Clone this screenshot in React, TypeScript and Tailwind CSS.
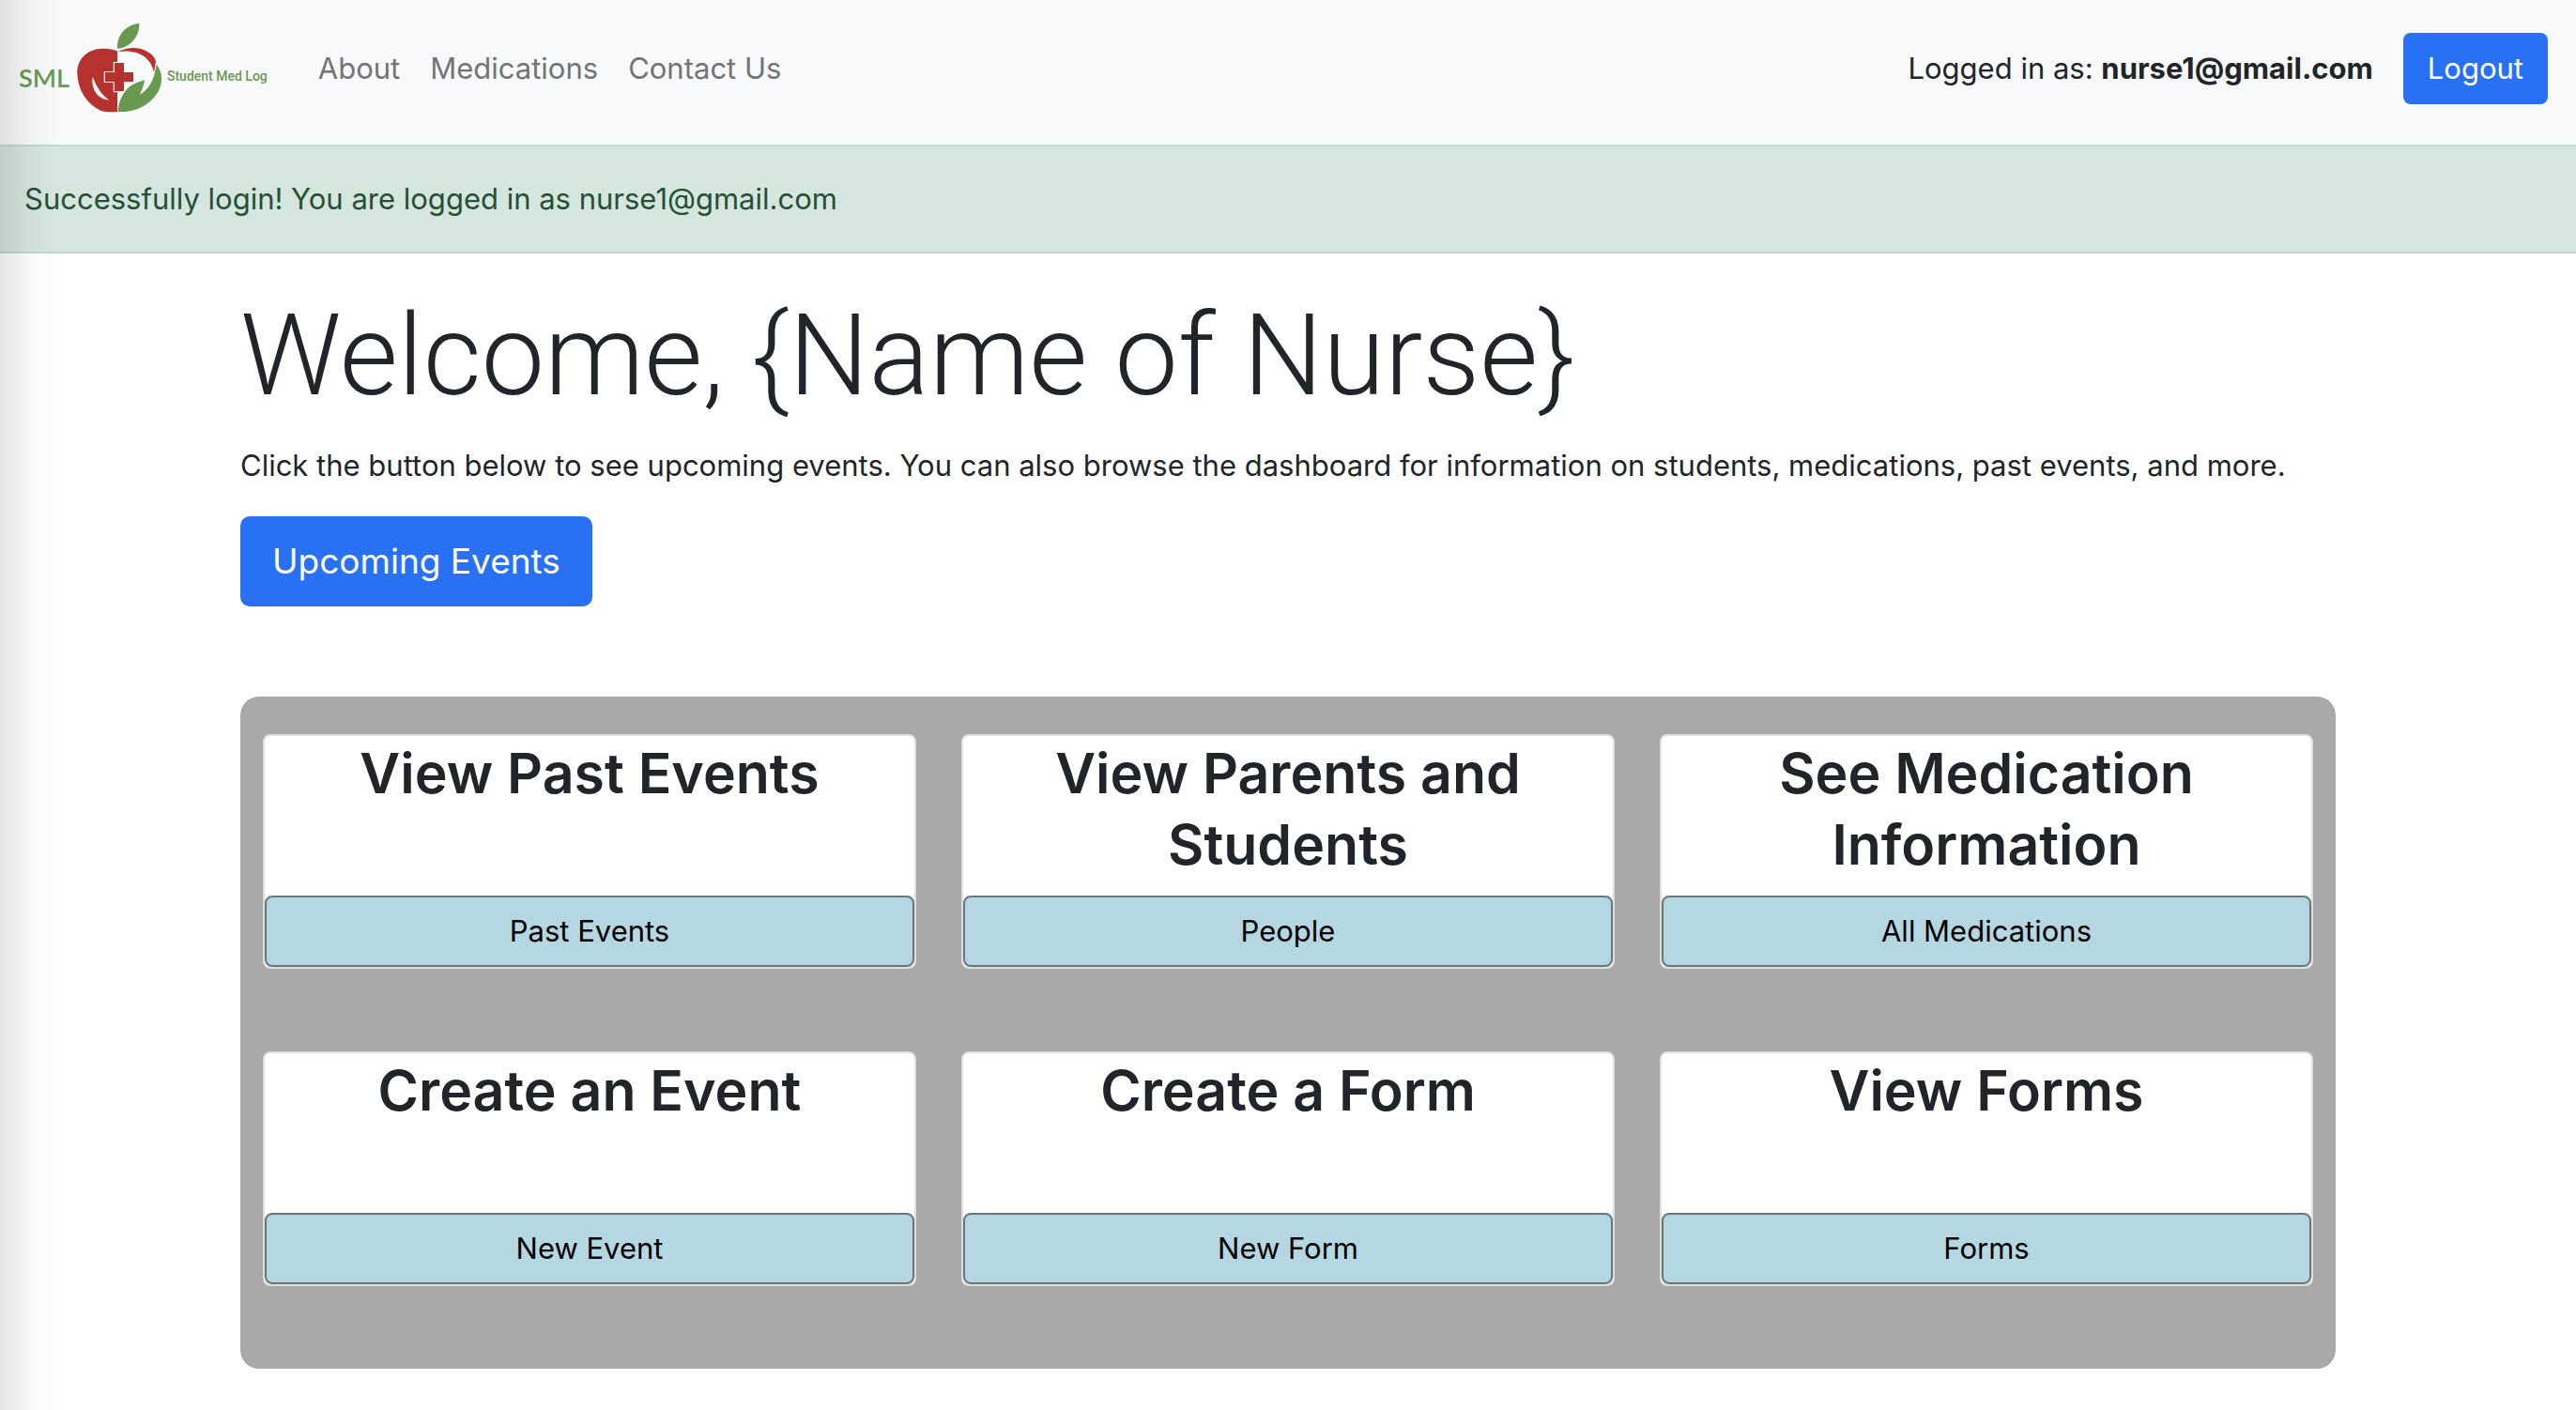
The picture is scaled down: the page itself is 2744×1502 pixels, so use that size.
const cards = [
  { title: 'View Past Events', action: 'Past Events' },
  { title: 'View Parents and Students', action: 'People' },
  { title: 'See Medication Information', action: 'All Medications' },
  { title: 'Create an Event', action: 'New Event' },
  { title: 'Create a Form', action: 'New Form' },
  { title: 'View Forms', action: 'Forms' },
];

const links = ['About', 'Medications', 'Contact Us'];

function Apple() {
  return (
    <svg viewBox="0 0 92 98" className="h-[98px] w-[92px]" aria-hidden="true">
      <path fill="#68994f" d="M43 27.700C42 13 53 2 66.300 1C67 14 57 27 43 27.700Z" />
      <path
        fill="#b5322f"
        d="M43 30.500C38 28.500 33 27.500 27 27.700C11 28 0 39 .3 54C1 72 10 86 24.500 93.500C29 95.500 37 95.500 43 95.200V74.300H38.700V64H28.700V52.300H38.700V42H43Z"
      />
      <path fill="#b5322f" d="M40 43H50V53H60V63H50V73H40V63H30V53H40Z" />
      <path fill="#f8f9fb" d="M16.700 57.700C21 69 26 77 34 82.300C22 82 14.500 70 16.700 57.700Z" />
      <path fill="#b5322f" d="M43.700 31C52 27 60 26 67 27.700C76 30 82 35 84 41L82 53.300C79 37 65 28 43.700 31Z" />
      <path
        fill="#68994f"
        d="M84.500 44.500C88 49 90 53 90 60C90 69 86 76 80 82C70 92 57 96 43.700 95C44 84 49 74 57 67.500C62 64.500 67 63 72 61.300C71.500 67 69 72 66.700 77C77 71 83 60 84.500 44.500Z"
      />
    </svg>
  );
}

export default function App() {
  return (
    <div className="relative min-h-screen bg-white font-['Inter','Liberation_Sans',sans-serif] text-[31px] leading-[48px] text-[#212529]">
      <nav className="flex h-[154px] items-center bg-[#f8f9fb] pr-[30px] pb-2 pl-5">
        <a href="#home" className="flex items-center text-[#68994f]">
          <span className="mr-2 pt-5 font-['Lato',sans-serif] text-[27px] font-semibold">SML</span>
          <Apple />
          <span className="ml-1 pt-4 font-['Roboto',sans-serif] text-[14px] font-medium">Student Med Log</span>
        </a>
        <ul className="ml-[54px] flex gap-8 text-[#737476]">
          {links.map((l) => (
            <li key={l}>
              <a href="#nav">{l}</a>
            </li>
          ))}
        </ul>
        <div className="ml-auto flex items-center gap-8">
          <span>
            Logged in as: <b>nurse1@gmail.com</b>
          </span>
          <button className="h-[76px] rounded-lg bg-[#2871f5] px-[26px] text-white">Logout</button>
        </div>
      </nav>
      <div role="alert" className="border-y-2 border-[#c1d9ce] bg-[#d5e6de] px-[26px] py-8 text-[#255036]">
        Successfully login! You are logged in as nurse1@gmail.com
      </div>
      <main className="mx-auto max-w-[2232px] pt-8">
        <h1 className="mb-4 font-['Roboto',sans-serif] text-[120px] leading-[154px] font-light">
          Welcome, {'{Name of Nurse}'}
        </h1>
        <p>
          Click the button below to see upcoming events. You can also browse the dashboard for information on students,
          medications, past events, and more.
        </p>
        <button className="mt-[30px] h-24 rounded-[10px] bg-[#2871f5] px-[34px] text-[37px] text-white">
          Upcoming Events
        </button>
        <section className="mt-24 grid grid-cols-3 gap-x-12 gap-y-[88px] rounded-[20px] bg-[#a9a9a9] px-6 pt-10 pb-[88px]">
          {cards.map((c) => (
            <article key={c.title} className="flex min-h-[250px] flex-col rounded-lg border-2 border-[#dfdfdf] bg-white text-center">
              <h2 className="mb-3.5 px-16 pt-0.5 text-[59px] leading-[76px] font-semibold">{c.title}</h2>
              <button className="mt-auto h-[76px] rounded-lg border-2 border-[#6c757d] bg-[#b5d7e2] text-black">
                {c.action}
              </button>
            </article>
          ))}
        </section>
      </main>
      <div className="pointer-events-none absolute inset-y-0 left-0 w-16 bg-linear-to-r from-black/10 via-black/3 to-transparent" />
    </div>
  );
}
